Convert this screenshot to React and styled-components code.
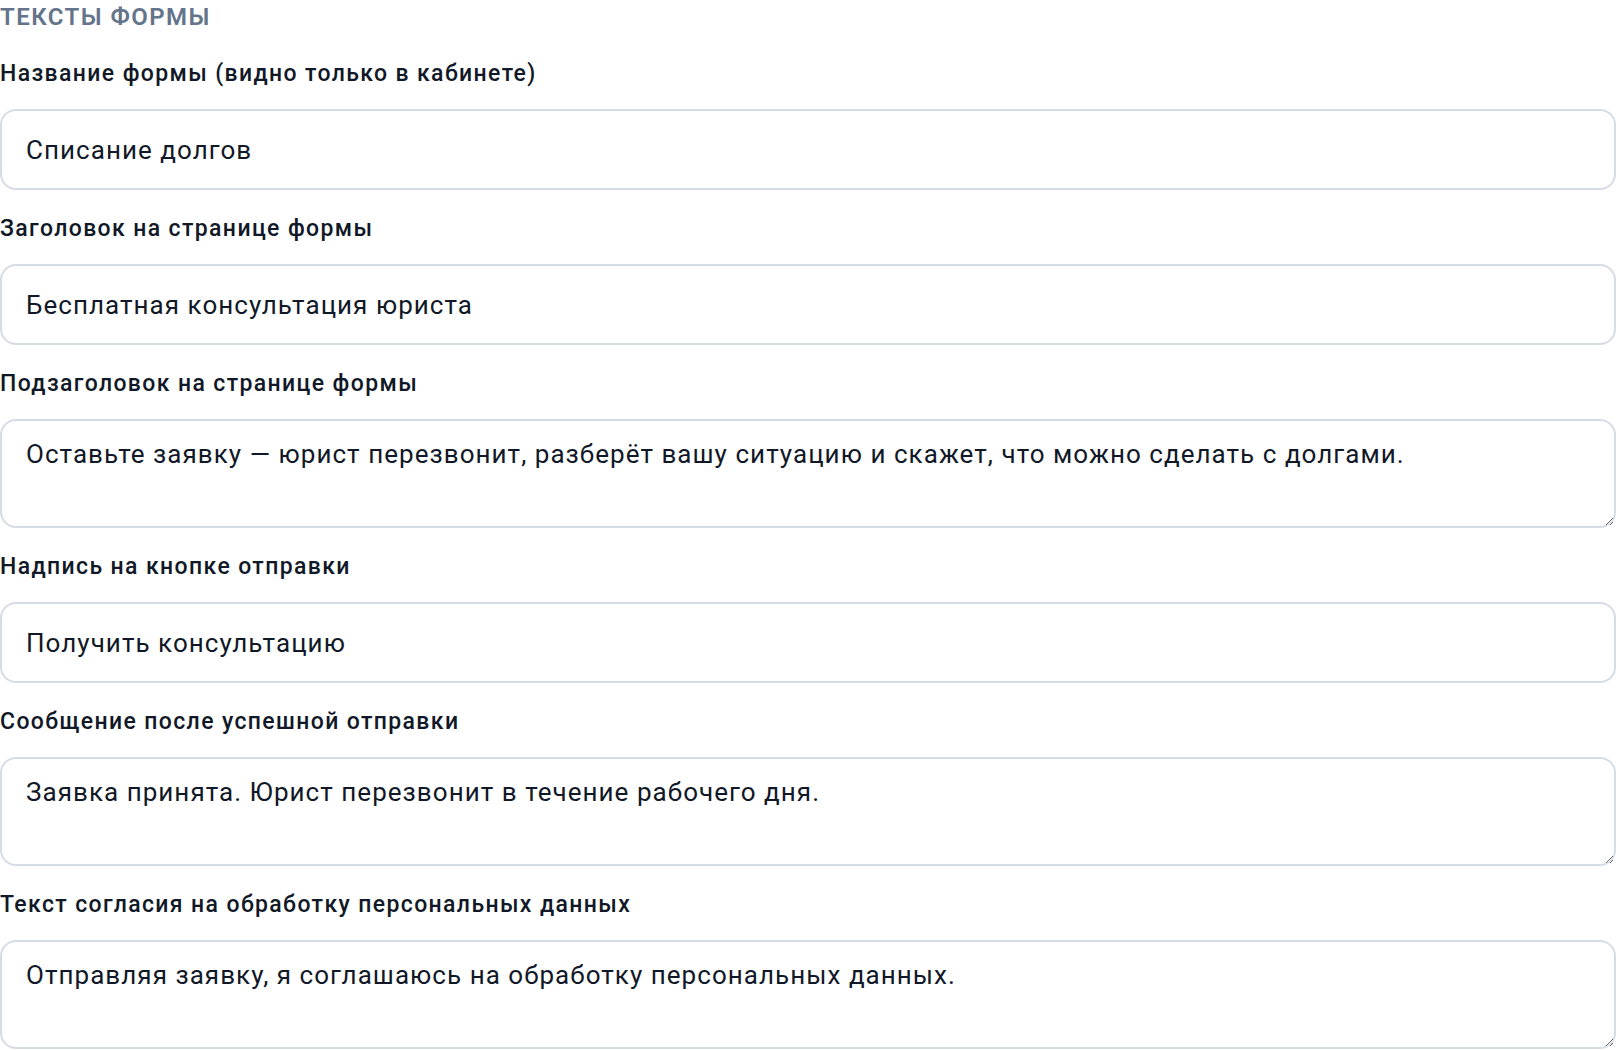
import styled, { createGlobalStyle } from 'styled-components';

const GlobalStyle = createGlobalStyle`
  html, body {
    margin: 0;
    padding: 0;
    background: #ffffff;
  }
  body {
    font-family: Roboto, "Noto Sans", sans-serif;
    color: #111827;
  }
`;

const Section = styled.section`
  display: flex;
  flex-direction: column;
  gap: 24px;
  width: 100%;
  box-sizing: border-box;
`;

const SectionTitle = styled.h3`
  margin: 0 0 1px 0;
  font-size: 24px;
  line-height: 34px;
  font-weight: 600;
  letter-spacing: 0.06em;
  text-transform: uppercase;
  color: #64748b;
`;

const Field = styled.label`
  display: flex;
  flex-direction: column;
  gap: 20px;
`;

const FieldLabel = styled.span`
  font-size: 23px;
  line-height: 30px;
  font-weight: 500;
  letter-spacing: 0.06em;
  color: #111827;
`;

const baseControl = `
  width: 100%;
  box-sizing: border-box;
  border: 2px solid #d6dce6;
  border-radius: 16px;
  background: #ffffff;
  font-family: Roboto, "Noto Sans", sans-serif;
  font-size: 26px;
  line-height: 38px;
  letter-spacing: 0.04em;
  color: #111827;
  outline: none;
`;

const TextInput = styled.input`
  ${baseControl}
  height: 81px;
  padding: 0 24px;
`;

const TextArea = styled.textarea`
  ${baseControl}
  display: block;
  height: 109px;
  padding: 14px 24px;
  resize: vertical;
`;

const fields = [
  { id: 'name', label: 'Название формы (видно только в кабинете)', value: 'Списание долгов' },
  { id: 'title', label: 'Заголовок на странице формы', value: 'Бесплатная консультация юриста' },
  {
    id: 'subtitle',
    label: 'Подзаголовок на странице формы',
    value: 'Оставьте заявку — юрист перезвонит, разберёт вашу ситуацию и скажет, что можно сделать с долгами.',
    multiline: true,
  },
  { id: 'button', label: 'Надпись на кнопке отправки', value: 'Получить консультацию' },
  {
    id: 'success',
    label: 'Сообщение после успешной отправки',
    value: 'Заявка принята. Юрист перезвонит в течение рабочего дня.',
    multiline: true,
  },
  {
    id: 'consent',
    label: 'Текст согласия на обработку персональных данных',
    value: 'Отправляя заявку, я соглашаюсь на обработку персональных данных.',
    multiline: true,
  },
];

const App = () => (
  <>
    <GlobalStyle />
    <Section>
      <SectionTitle>Тексты формы</SectionTitle>
      {fields.map((field) => (
        <Field key={field.id}>
          <FieldLabel>{field.label}</FieldLabel>
          {field.multiline
            ? <TextArea defaultValue={field.value} />
            : <TextInput defaultValue={field.value} />
          }
        </Field>
      ))}
    </Section>
  </>
);

export default App;
